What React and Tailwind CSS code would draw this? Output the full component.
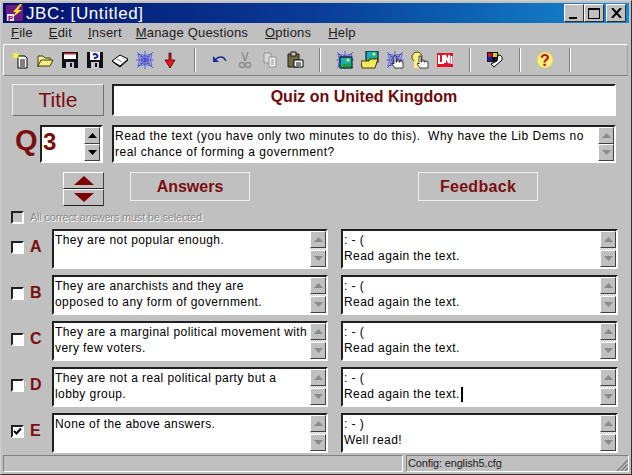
import React from "react";

const answers = [
  { letter: "A", text: "They are not popular enough.", feedback: ": - (", feedback2: "Read again the text." },
  { letter: "B", text: "They are anarchists and they are\nopposed to any form of government.", feedback: ": - (", feedback2: "Read again the text." },
  { letter: "C", text: "They are a marginal political movement with\nvery few voters.", feedback: ": - (", feedback2: "Read again the text." },
  { letter: "D", text: "They are not a real political party but a\nlobby group.", feedback: ": - (", feedback2: "Read again the text.", caret: true },
  { letter: "E", text: "None of the above answers.", feedback: ": - )", feedback2: "Well read!", checked: true },
];

const raised = "border border-t-white border-l-white border-r-[#404040] border-b-[#404040] bg-[#c0c0c0]";
const sunken = "border-2 border-t-[#202020] border-l-[#202020] border-r-white border-b-white";

const ScrollButton = ({ down, dark }) => (
  <div className={`${raised} w-[16px] h-[17px] flex items-center justify-center`}>
    <svg width="9" height="5" viewBox="0 0 9 5">
      <path d={down ? "M0 0h9L4.5 5z" : "M0 5h9L4.5 0z"} fill={dark ? "#000" : "#8a8a8a"} />
    </svg>
  </div>
);

// the little two button scrollbar used in every text box
const Scroll = ({ dark }) => (
  <div className="w-[16px] flex flex-col justify-between shrink-0 bg-[repeating-conic-gradient(#fff_0_25%,#c0c0c0_0_50%)] bg-[length:2px_2px]">
    <ScrollButton dark={dark} />
    <ScrollButton down dark={dark} />
  </div>
);

const TextBox = ({ lines, caret, wide, className }) => (
  <div className={`${sunken} bg-white flex ${className}`}>
    <div className={`flex-1 pl-[1px] pt-[1px] text-[12px] leading-[16px] text-black whitespace-pre ${wide ? "tracking-[0.49px]" : "tracking-[0.42px]"}`}>
      {lines.map((line, i) => (
        <div key={i} className="flex items-center h-[16px]">
          {line}
          {caret && i === lines.length - 1 && <span className="w-[2px] h-[15px] bg-black ml-[1px]" />}
        </div>
      ))}
    </div>
    <Scroll />
  </div>
);

const Checkbox = ({ checked, disabled }) => (
  <div className={`${sunken} w-[13px] h-[13px] shrink-0 flex items-center justify-center ${disabled ? "bg-[#c0c0c0]" : "bg-white"}`}>
    {checked && (
      <svg width="9" height="9" viewBox="0 0 9 9">
        <path d="M1 4l2.5 2.5L8 1.5" fill="none" stroke="#000" strokeWidth="2" />
      </svg>
    )}
  </div>
);

const Sep = () => (
  <div className="w-[25px] flex justify-center">
    <div className="w-[2px] h-[24px] border-l border-l-[#808080] border-r border-r-white" />
  </div>
);

const Tool = ({ children }) => <div className="w-[25px] h-[24px] flex items-center justify-center">{children}</div>;

const Ico = ({ children }) => (
  <svg width="18" height="18" viewBox="0 0 18 18">
    {children}
  </svg>
);

const Web = () => (
  <g fill="none" stroke="#3038e0" strokeWidth="0.7">
    <path d="M1 1l16 16M17 1L1 17M9 0v18M0 9h18" />
    <path d="M2 3q7 3 14 0q-3 6 0 12q-7-3-14 0q3-6 0-12z" />
    <path d="M4.500 5q4.500 2 9 0q-2 4 0 8q-4.500-2-9 0q2-4 0-8z" />
    <path d="M6.500 7q2.500 1 5 0q-1 2 0 4q-2.500-1-5 0q1-2 0-4z" />
  </g>
);

const Picture = ({ x = 0, y = 0 }) => (
  <g transform={`translate(${x} ${y})`}>
    <rect x="0" y="0" width="12" height="11" fill="#18b0c0" stroke="#000" />
    <path d="M1 10l3-4 3 2 2-3 2 5z" fill="#20a020" />
    <circle cx="8" cy="3" r="1.5" fill="#f0f040" />
  </g>
);

const Hand = ({ x = 0, y = 0 }) => (
  <path
    transform={`translate(${x} ${y})`}
    d="M2 1h2v6h1V5h2v2h1V6h2v1h1v6H3L0 9l1-1 1 1z"
    fill="#fff"
    stroke="#000"
    strokeWidth="0.7"
  />
);

const Menu = ({ u, rest, className }) => (
  <span className={className}>
    <span className="underline">{u}</span>
    {rest}
  </span>
);

export default function App() {
  return (
    <div className="w-[632px] h-[475px] bg-[#c0c0c0] border border-t-[#d0d0d0] border-l-[#d0d0d0] border-r-[#303030] border-b-[#303030] p-[2px] flex flex-col overflow-hidden font-['Liberation_Sans',Arial,sans-serif] text-black">
      {/* title bar */}
      <div className="h-[20px] shrink-0 flex items-center bg-gradient-to-r from-[#06106e] via-[#0a3c96] to-[#1a8ad2] pl-[3px] pr-[3px]">
        <svg width="18" height="18" viewBox="0 0 18 18" className="shrink-0">
          <rect x="0" y="1" width="17" height="16" fill="#6a1a80" />
          <rect x="1" y="10" width="7" height="7" fill="#e8e8f8" />
          <text x="2" y="16.5" fontSize="8" fontWeight="bold" fill="#800080" fontFamily="Liberation Sans">P</text>
          <path d="M14 0L7 8h3L7 13l9-7h-4l4-6z" fill="#ffe020" />
        </svg>
        <span className="ml-[2px] text-white text-[17px] tracking-[0.6px] leading-none">JBC: [Untitled]</span>
        <div className="ml-auto flex">
          {["min", "max"].map((k) => (
            <div key={k} className="w-[20px] h-[18px] border border-t-white border-l-white border-r-[#303030] border-b-[#303030] bg-[#c0c0c0] flex items-center justify-center">
              {k === "min" ? (
                <div className="w-[8px] h-[2px] bg-black mt-[9px] mr-[3px]" />
              ) : (
                <div className="w-[12px] h-[11px] border border-black border-t-2" />
              )}
            </div>
          ))}
          <div className="ml-[2px] w-[20px] h-[18px] border border-t-white border-l-white border-r-[#303030] border-b-[#303030] bg-[#c0c0c0] flex items-center justify-center">
            <svg width="11" height="10" viewBox="0 0 11 10">
              <path d="M1 0l9 10M10 0L1 10" stroke="#000" strokeWidth="2" />
            </svg>
          </div>
        </div>
      </div>

      {/* menu */}
      <div className="h-[20px] shrink-0 flex items-center text-[13px] tracking-[0.2px] text-[#202020] pl-[8px]">
        <Menu u="F" rest="ile" />
        <Menu u="E" rest="dit" className="ml-[16px]" />
        <Menu u="I" rest="nsert" className="ml-[16px]" />
        <Menu u="M" rest="anage Questions" className="ml-[14px]" />
        <Menu u="O" rest="ptions" className="ml-[17px]" />
        <Menu u="H" rest="elp" className="ml-[17px]" />
      </div>

      {/* toolbar */}
      <div className="h-[32px] mt-[1px] shrink-0 border border-t-white border-l-white border-r-[#a0a0a0] border-b-[#808080] flex items-center pl-[3px] mr-[1px]">
        <Tool>
          <Ico>
            <path d="M7 5h7l2 2v10H7z" fill="#fff" stroke="#000" />
            <path d="M9 9h5M9 11h5M9 13h5M9 15h5" stroke="#000" />
            <path d="M5 0l1 3 3-1-2 3 2 2-3-.5L5 9l-1-2.500L1 7l2-2-2-3 3 1z" fill="#f8f040" />
          </Ico>
        </Tool>
        <Tool>
          <Ico>
            <path d="M2 5h5l2 2h5v3H5l-3 6z" fill="#f8f0a0" stroke="#404000" />
            <path d="M2 15l3-6h12l-3 6z" fill="#f8f080" stroke="#404000" />
          </Ico>
        </Tool>
        <Tool>
          <Ico>
            <path d="M1 1h16v16H1z" fill="#101018" />
            <rect x="3" y="2" width="12" height="6" fill="#fff" />
            <rect x="3" y="2" width="12" height="1.500" fill="#e02030" />
            <rect x="5" y="11" width="8" height="6" fill="#c8c8c8" />
            <rect x="9" y="12" width="2" height="4" fill="#101018" />
          </Ico>
        </Tool>
        <Tool>
          <Ico>
            <path d="M1 1h16v16H1z" fill="#101018" />
            <rect x="4" y="1" width="10" height="8" fill="#fff" />
            <path d="M7 4q2-2 4 0t-2 3v1" fill="none" stroke="#1020d0" strokeWidth="2" />
            <rect x="5" y="11" width="8" height="6" fill="#c8c8c8" />
            <rect x="9" y="12" width="2" height="4" fill="#101018" />
          </Ico>
        </Tool>
        <Tool>
          <Ico>
            <path d="M1 10l8-6 8 4-8 7z" fill="#fff" stroke="#000" />
            <path d="M2 11l7 5 8-7" fill="none" stroke="#000" />
            <path d="M6 8l5 3" stroke="#808080" />
          </Ico>
        </Tool>
        <Tool>
          <Ico>
            <Web />
          </Ico>
        </Tool>
        <Tool>
          <Ico>
            <path d="M8 2h2v7h4l-5 8-5-8h4z" fill="#f01020" stroke="#400000" strokeWidth="0.8" />
          </Ico>
        </Tool>
        <Sep />
        <Tool>
          <Ico>
            <path d="M2 5v6h6z" fill="#1828a0" />
            <path d="M5 8q2-2 5-2t5 4" fill="none" stroke="#1828a0" strokeWidth="1.500" />
          </Ico>
        </Tool>
        <Tool>
          <Ico>
            <path d="M6 1l3 9M12 1L9 10" stroke="#909090" strokeWidth="1.500" />
            <circle cx="6" cy="14" r="2.500" fill="none" stroke="#909090" strokeWidth="1.500" />
            <circle cx="12" cy="14" r="2.500" fill="none" stroke="#909090" strokeWidth="1.500" />
          </Ico>
        </Tool>
        <Tool>
          <Ico>
            <path d="M3 2h7v10H3z" fill="#d8d8d8" stroke="#909090" />
            <path d="M8 6h7v10H8z" fill="#f0f0f0" stroke="#909090" />
            <path d="M10 9h3M10 11h3M10 13h3" stroke="#909090" />
          </Ico>
        </Tool>
        <Tool>
          <Ico>
            <path d="M2 3h11v13H2z" fill="#706840" stroke="#202010" />
            <rect x="5" y="1" width="5" height="4" fill="#c0c0c0" stroke="#202010" />
            <path d="M8 9h9v7H8z" fill="#fff" stroke="#000" />
            <path d="M10 12h5M10 14h5" stroke="#000824" />
          </Ico>
        </Tool>
        <Sep />
        <Tool>
          <Ico>
            <Web />
            <Picture x="4" y="6" />
          </Ico>
        </Tool>
        <Tool>
          <Ico>
            <Picture x="5" y="0" />
            <path d="M0 10h8l2-2h7l-3 9H1z" fill="#f8e860" stroke="#403800" />
          </Ico>
        </Tool>
        <Tool>
          <Ico>
            <Web />
            <Hand x="6" y="4" />
          </Ico>
        </Tool>
        <Tool>
          <Ico>
            <circle cx="6" cy="6" r="5" fill="#f8f080" stroke="#504800" />
            <rect x="3" y="10" width="6" height="7" fill="#f8f080" />
            <Hand x="6" y="4" />
          </Ico>
        </Tool>
        <Tool>
          <svg width="18" height="18" viewBox="0 0 18 18">
            <rect x="1" y="2" width="16" height="14" fill="#e81020" />
            <path d="M3 4v8h4V4M9 12V4l4 8V4" fill="none" stroke="#fff" strokeWidth="2" />
            <rect x="14.500" y="5" width="2" height="8" fill="#fff" />
          </svg>
        </Tool>
        <Sep />
        <Tool>
          <Ico>
            <rect x="1" y="1" width="11" height="10" fill="#101010" />
            <rect x="2" y="2" width="4" height="4" fill="#d01020" />
            <rect x="7" y="2" width="4" height="4" fill="#e0d020" />
            <rect x="2" y="6" width="4" height="4" fill="#1020c0" />
            <path d="M12 4q5 0 4 5l-8 7-3-3 6-3z" fill="#fff" stroke="#000" />
          </Ico>
        </Tool>
        <Sep />
        <Tool>
          <Ico>
            <circle cx="9" cy="9" r="8" fill="#f8f080" stroke="#e0d050" />
            <text x="9" y="14.500" textAnchor="middle" fontSize="16" fontWeight="bold" fill="#c01010" fontFamily="Liberation Sans">?</text>
          </Ico>
        </Tool>
        <Sep />
      </div>

      {/* quiz title */}
      <div className="mt-[8px] shrink-0 flex h-[32px] pl-[9px]">
        <div className="w-[92px] border border-t-[#f0f0f0] border-l-[#f0f0f0] border-r-[#707070] border-b-[#707070] flex items-center justify-center text-[21px] text-[#7a0f0f]">
          Title
        </div>
        <div className={`${sunken} ml-[8px] w-[504px] bg-white flex items-center justify-center font-bold text-[16px] text-[#700a0a] pb-[7px]`}>
          Quiz on United Kingdom
        </div>
      </div>

      {/* question */}
      <div className="mt-[9px] shrink-0 flex h-[38px] pl-[12px]">
        <span className="w-[25px] font-bold text-[29px] leading-[30px] text-[#7a0f0f]">Q</span>
        <div className={`${sunken} w-[63px] bg-white flex`}>
          <span className="flex-1 pl-[1px] font-bold text-[24px] leading-[30px] text-[#7a0f0f]">3</span>
          <div className="mr-[1px] flex"><Scroll dark /></div>
        </div>
        <TextBox
          wide
          className="ml-[9px] w-[504px]"
          lines={["Read the text (you have only two minutes to do this).  Why have the Lib Dems no", "real chance of forming a government?"]}
        />
      </div>

      {/* arrows and headings */}
      <div className="mt-[9px] shrink-0 flex items-start pl-[60px]">
        <div className="w-[41px] h-[34px] flex flex-col">
          {[0, 1].map((i) => (
            <div key={i} className="flex-1 border border-t-white border-l-white border-r-[#404040] border-b-[#202020] flex items-center justify-center">
              <svg width="20" height="9" viewBox="0 0 20 9">
                <path d={i ? "M0 0h20L10 9z" : "M0 9h20L10 0z"} fill="#800000" />
              </svg>
            </div>
          ))}
        </div>
        <div className="ml-[26px] w-[120px] h-[29px] border border-[#f0f0f0] flex items-center justify-center font-bold text-[16px] text-[#7a0f0f]">
          Answers
        </div>
        <div className="ml-[168px] w-[120px] h-[29px] border border-[#f0f0f0] flex items-center justify-center font-bold text-[16px] tracking-[0.3px] text-[#7a0f0f]">
          Feedback
        </div>
      </div>

      {/* all correct checkbox */}
      <div className="mt-[4px] shrink-0 flex items-center h-[14px] pl-[8px]">
        <Checkbox disabled />
        <span className="ml-[6px] text-[11px] tracking-[-0.2px] text-[#8c8c8c] [text-shadow:1px_1px_0_#fff]">All correct answers must be selected</span>
      </div>

      {/* answer rows */}
      <div className="mt-[5px] flex flex-col gap-[6px]">
        {answers.map((a) => (
          <div key={a.letter} className="h-[40px] flex pl-[8px]">
            <div className="w-[41px] flex items-center pb-[4px]">
              <Checkbox checked={a.checked} />
              <span className="ml-[6px] font-bold text-[16px] text-[#7a0f0f]">{a.letter}</span>
            </div>
            <TextBox className="w-[276px]" lines={a.text.split("\n")} />
            <TextBox className="ml-[13px] w-[277px]" lines={[a.feedback, a.feedback2]} caret={a.caret} />
          </div>
        ))}
      </div>

      {/* status bar */}
      <div className="mt-auto h-[17px] shrink-0 flex gap-[3px] text-[11px] tracking-[-0.15px]">
        <div className="w-[400px] border border-t-[#808080] border-l-[#808080] border-r-white border-b-white" />
        <div className="flex-1 flex items-center pl-[1px] border border-t-[#808080] border-l-[#808080] border-r-white border-b-white text-[#202020] relative">
          Config: english5.cfg
          <svg width="13" height="13" viewBox="0 0 13 13" className="absolute right-0 bottom-0">
            <path d="M2 13L13 2M6 13l7-7M10 13l3-3" stroke="#808080" strokeWidth="1.500" />
          </svg>
        </div>
      </div>
    </div>
  );
}
